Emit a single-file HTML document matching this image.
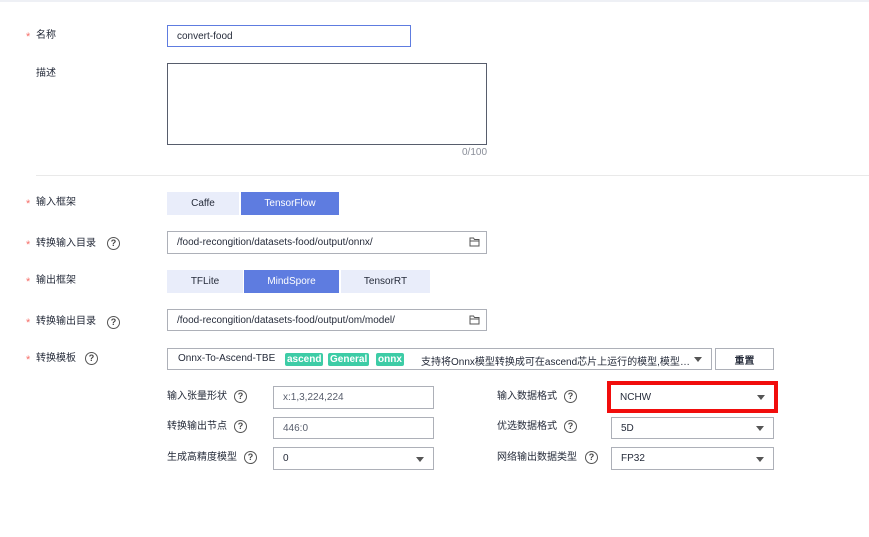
<!DOCTYPE html>
<html><head><meta charset="utf-8"><style>
*{box-sizing:border-box;margin:0;padding:0}
body{width:869px;height:537px;background:#fff;position:relative;overflow:hidden;font-family:"Liberation Sans","Noto Sans CJK SC",sans-serif;font-size:10px;color:#252b3a}
.a{position:absolute}
.lbl{position:absolute;font-size:10px;color:#252b3a;line-height:14px;white-space:nowrap}
.star{position:absolute;color:#f66f6a;font-size:11px;line-height:14px}
.inp{position:absolute;border:1px solid #adb0b8;background:#fff;padding-left:9px;display:flex;align-items:center;font-size:10px;color:#252b3a;white-space:nowrap}
.q{position:absolute;width:13px;height:13px;border:1.2px solid #555;border-radius:50%;font-size:9px;line-height:11px;text-align:center;color:#444;font-weight:bold}
.btn{position:absolute;background:#e9edfa;color:#252b3a;display:flex;align-items:center;justify-content:center;font-size:10px}
.on{background:#5e7ce0;color:#fff}
.arr{position:absolute;right:9px;top:50%;margin-top:-2px;width:0;height:0;border-left:4px solid transparent;border-right:4px solid transparent;border-top:5px solid #555}
.tag{position:absolute;top:4px;background:#3dcca6;color:#fff;font-size:10px;line-height:13px;padding:0 2px;border-radius:2px;font-weight:bold}
.fold{position:absolute;right:6px;top:5px}
</style></head><body>
<div class="a" style="left:0;top:0;width:869px;height:2px;background:#eef0f5"></div>

<span class="star" style="left:26px;top:30px">*</span><span class="lbl" style="left:36px;top:29px">名称</span>
<div class="inp" style="left:167px;top:25px;width:244px;height:22px;border-color:#5e7ce0">convert-food</div>

<span class="lbl" style="left:36px;top:67px">描述</span>
<div class="inp" style="left:167px;top:63px;width:320px;height:82px;border-color:#575d6c"></div>
<span class="lbl" style="left:462px;top:146px;color:#8a8e99;font-size:10px">0/100</span>

<div class="a" style="left:36px;top:175px;width:833px;height:1px;background:#e9e9e9"></div>

<span class="star" style="left:26px;top:197px">*</span><span class="lbl" style="left:36px;top:196px">输入框架</span>
<div class="btn" style="left:167px;top:192px;width:72px;height:23px">Caffe</div>
<div class="btn on" style="left:241px;top:192px;width:98px;height:23px">TensorFlow</div>

<span class="star" style="left:26px;top:238px">*</span><span class="lbl" style="left:36px;top:237px">转换输入目录</span>
<div class="q" style="left:107px;top:237px">?</div>
<div class="inp" style="left:167px;top:231px;width:320px;height:23px">/food-recongition/datasets-food/output/onnx/
<svg class="fold" width="11" height="10" viewBox="0 0 11 10"><path d="M1 1h3.5l1 1.5H10v6.5H1z M1 4h9" fill="none" stroke="#555" stroke-width="1"/></svg></div>

<span class="star" style="left:26px;top:275px">*</span><span class="lbl" style="left:36px;top:274px">输出框架</span>
<div class="btn" style="left:167px;top:270px;width:76px;height:23px">TFLite</div>
<div class="btn on" style="left:244px;top:270px;width:95px;height:23px">MindSpore</div>
<div class="btn" style="left:341px;top:270px;width:89px;height:23px">TensorRT</div>

<span class="star" style="left:26px;top:316px">*</span><span class="lbl" style="left:36px;top:315px">转换输出目录</span>
<div class="q" style="left:107px;top:316px">?</div>
<div class="inp" style="left:167px;top:309px;width:320px;height:22px">/food-recongition/datasets-food/output/om/model/
<svg class="fold" width="11" height="10" viewBox="0 0 11 10"><path d="M1 1h3.5l1 1.5H10v6.5H1z M1 4h9" fill="none" stroke="#555" stroke-width="1"/></svg></div>

<span class="star" style="left:26px;top:353px">*</span><span class="lbl" style="left:36px;top:352px">转换模板</span>
<div class="q" style="left:85px;top:352px">?</div>
<div class="inp" style="left:167px;top:348px;width:545px;height:22px;padding-left:10px;overflow:hidden">
<span class="a" style="left:10px;top:4px">Onnx-To-Ascend-TBE</span>
<span class="tag" style="left:117px">ascend</span>
<span class="tag" style="left:160px">General</span>
<span class="tag" style="left:208px">onnx</span>
<span class="a" style="left:253px;top:4px;width:270px;overflow:hidden;text-overflow:ellipsis;white-space:nowrap">支持将Onnx模型转换成可在ascend芯片上运行的模型,模型先转换成可在</span>
<span class="arr"></span></div>
<div class="inp" style="left:715px;top:348px;width:59px;height:22px;padding:0;justify-content:center;font-weight:bold">重置</div>

<span class="lbl" style="left:167px;top:390px">输入张量形状</span><div class="q" style="left:234px;top:390px">?</div>
<div class="inp" style="left:273px;top:386px;width:161px;height:23px;color:#575d6c">x:1,3,224,224</div>
<span class="lbl" style="left:497px;top:390px">输入数据格式</span><div class="q" style="left:564px;top:390px">?</div>
<div class="a" style="left:607px;top:381px;width:171px;height:32px;border:4px solid #f10d0c"></div>
<div class="inp" style="left:611px;top:385px;width:163px;height:24px;border:none">NCHW<span class="arr"></span></div>

<span class="lbl" style="left:167px;top:420px">转换输出节点</span><div class="q" style="left:234px;top:420px">?</div>
<div class="inp" style="left:273px;top:417px;width:161px;height:22px;color:#575d6c">446:0</div>
<span class="lbl" style="left:497px;top:420px">优选数据格式</span><div class="q" style="left:564px;top:420px">?</div>
<div class="inp" style="left:611px;top:417px;width:163px;height:22px">5D<span class="arr"></span></div>

<span class="lbl" style="left:167px;top:451px">生成高精度模型</span><div class="q" style="left:244px;top:451px">?</div>
<div class="inp" style="left:273px;top:447px;width:161px;height:23px">0<span class="arr"></span></div>
<span class="lbl" style="left:497px;top:451px">网络输出数据类型</span><div class="q" style="left:585px;top:451px">?</div>
<div class="inp" style="left:611px;top:447px;width:163px;height:23px">FP32<span class="arr"></span></div>
</body></html>
